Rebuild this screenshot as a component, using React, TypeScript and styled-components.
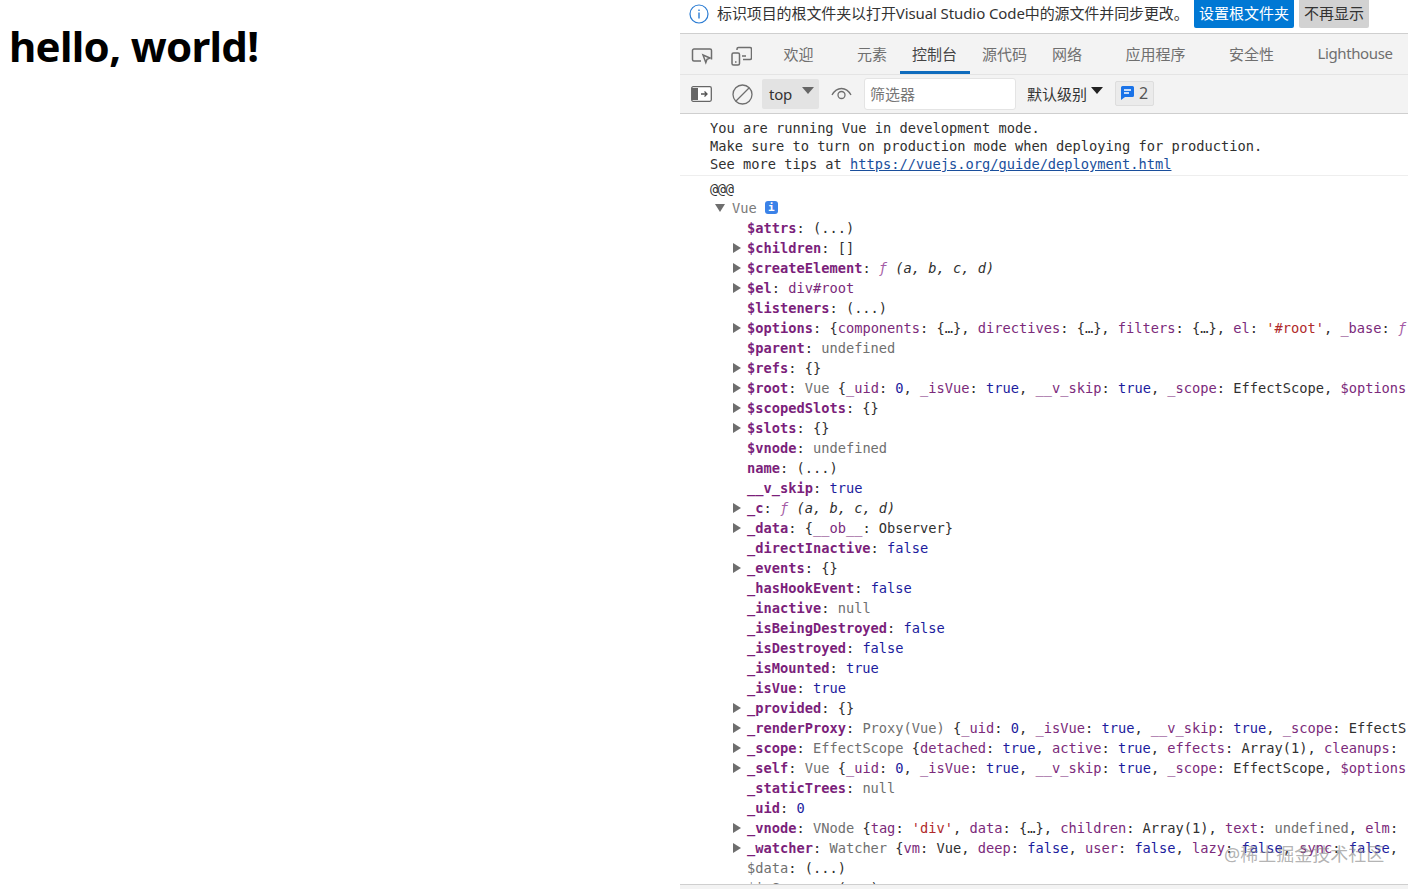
import styled, { createGlobalStyle } from 'styled-components';

type Token = [string, string];
type Row = { arrow?: boolean; tokens: Token[] };

const k = (t: string): Token => ['key', t];
const d = (t: string): Token => ['dim', t];
const p = (t: string): Token => ['plain', t];
const g = (t: string): Token => ['gray', t];
const b = (t: string): Token => ['blue', t];
const s = (t: string): Token => ['str', t];
const a = (t: string): Token => ['attr', t];
const f = (t: string): Token => ['fn', t];
const sig = (t: string): Token => ['sig', t];

const rows: Row[] = [
  { tokens: [k('$attrs'), p(': (...)')] },
  { arrow: true, tokens: [k('$children'), p(': []')] },
  { arrow: true, tokens: [k('$createElement'), p(': '), f('ƒ '), sig('(a, b, c, d)')] },
  { arrow: true, tokens: [k('$el'), p(': '), a('div#root')] },
  { tokens: [k('$listeners'), p(': (...)')] },
  {
    arrow: true,
    tokens: [
      k('$options'),
      p(': {'),
      a('components'),
      p(': {…}, '),
      a('directives'),
      p(': {…}, '),
      a('filters'),
      p(': {…}, '),
      a('el'),
      p(': '),
      s("'#root'"),
      p(', '),
      a('_base'),
      p(': '),
      f('ƒ'),
    ],
  },
  { tokens: [k('$parent'), p(': '), g('undefined')] },
  { arrow: true, tokens: [k('$refs'), p(': {}')] },
  {
    arrow: true,
    tokens: [
      k('$root'),
      p(': '),
      g('Vue '),
      p('{'),
      a('_uid'),
      p(': '),
      b('0'),
      p(', '),
      a('_isVue'),
      p(': '),
      b('true'),
      p(', '),
      a('__v_skip'),
      p(': '),
      b('true'),
      p(', '),
      a('_scope'),
      p(': EffectScope, '),
      a('$options'),
    ],
  },
  { arrow: true, tokens: [k('$scopedSlots'), p(': {}')] },
  { arrow: true, tokens: [k('$slots'), p(': {}')] },
  { tokens: [k('$vnode'), p(': '), g('undefined')] },
  { tokens: [k('name'), p(': (...)')] },
  { tokens: [k('__v_skip'), p(': '), b('true')] },
  { arrow: true, tokens: [k('_c'), p(': '), f('ƒ '), sig('(a, b, c, d)')] },
  { arrow: true, tokens: [k('_data'), p(': {'), a('__ob__'), p(': Observer}')] },
  { tokens: [k('_directInactive'), p(': '), b('false')] },
  { arrow: true, tokens: [k('_events'), p(': {}')] },
  { tokens: [k('_hasHookEvent'), p(': '), b('false')] },
  { tokens: [k('_inactive'), p(': '), g('null')] },
  { tokens: [k('_isBeingDestroyed'), p(': '), b('false')] },
  { tokens: [k('_isDestroyed'), p(': '), b('false')] },
  { tokens: [k('_isMounted'), p(': '), b('true')] },
  { tokens: [k('_isVue'), p(': '), b('true')] },
  { arrow: true, tokens: [k('_provided'), p(': {}')] },
  {
    arrow: true,
    tokens: [
      k('_renderProxy'),
      p(': '),
      g('Proxy(Vue) '),
      p('{'),
      a('_uid'),
      p(': '),
      b('0'),
      p(', '),
      a('_isVue'),
      p(': '),
      b('true'),
      p(', '),
      a('__v_skip'),
      p(': '),
      b('true'),
      p(', '),
      a('_scope'),
      p(': EffectS'),
    ],
  },
  {
    arrow: true,
    tokens: [
      k('_scope'),
      p(': '),
      g('EffectScope '),
      p('{'),
      a('detached'),
      p(': '),
      b('true'),
      p(', '),
      a('active'),
      p(': '),
      b('true'),
      p(', '),
      a('effects'),
      p(': Array(1), '),
      a('cleanups'),
      p(': '),
    ],
  },
  {
    arrow: true,
    tokens: [
      k('_self'),
      p(': '),
      g('Vue '),
      p('{'),
      a('_uid'),
      p(': '),
      b('0'),
      p(', '),
      a('_isVue'),
      p(': '),
      b('true'),
      p(', '),
      a('__v_skip'),
      p(': '),
      b('true'),
      p(', '),
      a('_scope'),
      p(': EffectScope, '),
      a('$options'),
    ],
  },
  { tokens: [k('_staticTrees'), p(': '), g('null')] },
  { tokens: [k('_uid'), p(': '), b('0')] },
  {
    arrow: true,
    tokens: [
      k('_vnode'),
      p(': '),
      g('VNode '),
      p('{'),
      a('tag'),
      p(': '),
      s("'div'"),
      p(', '),
      a('data'),
      p(': {…}, '),
      a('children'),
      p(': Array(1), '),
      a('text'),
      p(': '),
      g('undefined'),
      p(', '),
      a('elm'),
      p(':'),
    ],
  },
  {
    arrow: true,
    tokens: [
      k('_watcher'),
      p(': '),
      g('Watcher '),
      p('{'),
      a('vm'),
      p(': Vue, '),
      a('deep'),
      p(': '),
      b('false'),
      p(', '),
      a('user'),
      p(': '),
      b('false'),
      p(', '),
      a('lazy'),
      p(': '),
      b('false'),
      p(', '),
      a('sync'),
      p(': '),
      b('false'),
      p(', '),
    ],
  },
  { tokens: [d('$data'), p(': (...)')] },
  { tokens: [d('$isServer'), p(': (...)')] },
];

const tabs = [
  { label: '欢迎', extra: true },
  { label: '元素' },
  { label: '控制台', active: true },
  { label: '源代码' },
  { label: '网络', extra: true },
  { label: '应用程序', extra: true },
  { label: '安全性', extra: true },
  { label: 'Lighthouse', latin: true },
];

const GlobalStyle = createGlobalStyle`
  html, body {
    margin: 0;
    padding: 0;
    background: #fff;
  }
  body {
    font-family: "Noto Sans", "Noto Sans CJK SC", sans-serif;
  }
`;

const Page = styled.div`
  display: flex;
  width: 1408px;
  height: 889px;
  overflow: hidden;
`;

const Preview = styled.main`
  width: 680px;
  flex-shrink: 0;
  padding: 17px 9px;
  box-sizing: border-box;
`;

const Heading = styled.h1`
  margin: 0;
  font-family: "Noto Sans", "Liberation Sans", sans-serif;
  font-size: 42px;
  line-height: 58px;
  letter-spacing: -0.7px;
  font-weight: 700;
  color: #000;
`;

const DevTools = styled.section`
  position: relative;
  width: 728px;
  height: 889px;
  display: flex;
  flex-direction: column;
  overflow: hidden;
`;

const Banner = styled.div`
  height: 34px;
  flex-shrink: 0;
  display: flex;
  align-items: center;
  padding: 0 0 5px 9px;
  box-sizing: border-box;
  border-bottom: 1px solid #cfcfcf;
  font-size: 15px;
  color: #333;
  white-space: nowrap;
`;

const BannerText = styled.span`
  margin-left: 8px;
  padding-bottom: 4px;
  width: 477px;
  letter-spacing: -0.1px;
`;

const BannerButton = styled.button<{ $primary?: boolean }>`
  height: 28px;
  margin: 0 5px 0 0;
  padding: 0 5px 4px;
  border: 0;
  border-radius: 0 0 2px 2px;
  font: inherit;
  background: ${(props) => (props.$primary ? '#0078d4' : '#d2d2d2')};
  color: ${(props) => (props.$primary ? '#fff' : '#333')};
`;

const TabBar = styled.nav`
  height: 41px;
  flex-shrink: 0;
  display: flex;
  align-items: stretch;
  padding-left: 11px;
  box-sizing: border-box;
  background: #f3f3f3;
  border-bottom: 1px solid #e4e4e4;
`;

const IconSlot = styled.div`
  display: flex;
  flex-shrink: 0;
  align-items: center;
  width: 40px;
  color: #6e6e6e;
`;

const NavIconSlot = styled(IconSlot)`
  padding-top: 3px;
`;

const TabList = styled.div`
  display: flex;
`;

const Tab = styled.div<{ $active?: boolean; $extra?: boolean; $latin?: boolean }>`
  position: relative;
  display: flex;
  align-items: center;
  padding: 0 12.5px 2px;
  margin-right: ${(props) => (props.$extra ? '18.5px' : '0')};
  font-size: 15px;
  letter-spacing: ${(props) => (props.$latin ? '-0.4px' : '0')};
  color: ${(props) => (props.$active ? '#444' : '#6f6f6f')};
  white-space: nowrap;
  ${(props) =>
    props.$active &&
    `&::after {
      content: '';
      position: absolute;
      left: 0;
      right: 0;
      bottom: 0;
      height: 3px;
      background: #0f6cbd;
    }`}
`;

const FilterBar = styled.div`
  height: 39px;
  flex-shrink: 0;
  display: flex;
  align-items: center;
  padding-left: 11px;
  box-sizing: border-box;
  background: #f3f3f3;
  border-bottom: 1px solid #cfcfcf;
`;

const ClearSlot = styled(IconSlot)`
  width: 30px;
  margin-left: 1px;
`;

const ContextSelect = styled.div`
  width: 57px;
  height: 30px;
  flex-shrink: 0;
  box-sizing: border-box;
  padding: 3px 5px 0 7px;
  display: flex;
  justify-content: space-between;
  background: #e3e3e3;
  border-radius: 2px;
  font-size: 15px;
  line-height: 24px;
  letter-spacing: -0.2px;
  color: #333;
`;

const Caret = styled.span`
  width: 0;
  height: 0;
  margin-top: 5px;
  border-left: 6px solid transparent;
  border-right: 6px solid transparent;
  border-top: 7px solid #666;
`;

const EyeSlot = styled.div`
  display: flex;
  justify-content: center;
  width: 45px;
  color: #6e6e6e;
`;

const FilterInput = styled.div`
  width: 152px;
  height: 32px;
  box-sizing: border-box;
  padding-left: 5px;
  background: #fff;
  border: 1px solid #e4e4e4;
  border-radius: 3px;
  font-size: 15px;
  line-height: 31px;
  color: #777;
`;

const LevelSelect = styled.div`
  display: flex;
  margin-left: 11px;
  font-size: 15px;
  line-height: 24px;
  color: #333;
  width: 88px;
`;

const LevelCaret = styled(Caret)`
  margin-left: 4px;
  border-top-color: #222;
`;

const IssueBadge = styled.div`
  width: 39px;
  height: 25px;
  display: flex;
  align-items: center;
  justify-content: center;
  gap: 5px;
  box-sizing: border-box;
  padding-bottom: 2px;
  background: #ebebeb;
  border: 1px solid #ddd;
  border-radius: 2px;
  font-size: 16px;
  color: #555;
  margin-top: -1px;
`;

const ConsoleBody = styled.div`
  flex: 1;
  min-height: 0;
  overflow: hidden;
  font-family: "DejaVu Sans Mono", monospace;
  font-size: 13.7px;
  color: #303030;
  white-space: nowrap;
`;

const VueMessage = styled.div`
  height: 62px;
  box-sizing: border-box;
  padding: 5px 0 0 30px;
  line-height: 18px;
  border-bottom: 1px solid #eee;
`;

const DocLink = styled.a`
  color: #1a4f9c;
  text-decoration: underline;
`;

const LogBlock = styled.div`
  padding-top: 4px;
`;

const LogLine = styled.div`
  height: 18px;
  line-height: 18px;
  padding-left: 30px;
  letter-spacing: -0.4px;
`;

const VueLine = styled.div`
  display: flex;
  align-items: center;
  height: 20px;
  padding-left: 35px;
  color: #7a7a7a;
`;

const TreeRow = styled.div<{ $arrow?: boolean }>`
  display: flex;
  align-items: center;
  height: 20px;
  padding-left: ${(props) => (props.$arrow ? '53px' : '67px')};
`;

const ToggleRight = styled.span`
  width: 0;
  height: 0;
  margin-right: 6px;
  border-top: 5px solid transparent;
  border-bottom: 5px solid transparent;
  border-left: 8px solid #6e6e6e;
`;

const ToggleDown = styled.span`
  width: 0;
  height: 0;
  margin-right: 7px;
  border-left: 5px solid transparent;
  border-right: 5px solid transparent;
  border-top: 8px solid #6e6e6e;
`;

const InfoBadge = styled.span`
  width: 13px;
  height: 13px;
  margin: -2px 0 0 8px;
  border-radius: 3px;
  background: #3b82e8;
  color: #fff;
  font-size: 11px;
  font-weight: 700;
  line-height: 13px;
  text-align: center;
`;

const Piece = styled.span<{ $kind: string }>`
  white-space: pre;
  color: ${(props) =>
    ({
      key: '#7b1f7b',
      dim: '#6f6f6f',
      plain: '#303030',
      gray: '#6f6f6f',
      blue: '#1c1c9e',
      str: '#b02a2a',
      attr: '#7b2a7b',
      fn: '#a45aa4',
      sig: '#303030',
    })[props.$kind]};
  font-weight: ${(props) => (props.$kind === 'key' ? 700 : 400)};
  font-style: ${(props) => (props.$kind === 'fn' || props.$kind === 'sig' ? 'italic' : 'normal')};
`;

const Footer = styled.div`
  height: 4px;
  flex-shrink: 0;
  background: #f3f3f3;
  border-top: 1px solid #cfcfcf;
`;

const Watermark = styled.div`
  position: absolute;
  left: 544px;
  top: 842px;
  font-size: 18px;
  line-height: 24px;
  color: rgba(130, 130, 130, 0.62);
  white-space: nowrap;
`;

const InfoIcon = () => (
  <svg width="20" height="20" viewBox="0 0 20 20" fill="none" stroke="#2b7cd3" strokeWidth="1.2">
    <circle cx="10" cy="10" r="9" />
    <path d="M10 8.5v6M10 5.5v1.5" strokeWidth="1.4" />
  </svg>
);

const InspectIcon = () => (
  <svg width="22" height="20" viewBox="0 0 22 20" fill="none" stroke="currentColor" strokeWidth="1.5">
    <path d="M10 15H3a1.5 1.5 0 0 1-1.5-1.5v-9A1.5 1.5 0 0 1 3 3h16a1.5 1.5 0 0 1 1.5 1.5v9" />
    <path d="M12 9l7 3-3 1.2-1.2 3.3z" />
  </svg>
);

const DeviceIcon = () => (
  <svg width="21" height="20" viewBox="0 0 21 20" fill="none" stroke="currentColor" strokeWidth="1.5">
    <rect x="1" y="7" width="7.5" height="12" rx="1.5" />
    <path d="M6 4V3a1.5 1.5 0 0 1 1.5-1.5H19A1.5 1.5 0 0 1 20.5 3v9a1.5 1.5 0 0 1-1.5 1.5h-7" />
    <path d="M11 10h4" />
    <path d="M4 16h1.5" />
  </svg>
);

const SidebarIcon = () => (
  <svg width="21" height="16" viewBox="0 0 21 16">
    <rect x="0.7" y="0.7" width="19.6" height="14.6" rx="1.5" fill="#fff" stroke="#666" strokeWidth="1.3" />
    <path d="M1 2h6v12H1z" fill="#666" />
    <path d="M10 8h6M13.5 5.5L16 8l-2.5 2.5" fill="none" stroke="#555" strokeWidth="1.3" />
  </svg>
);

const ClearIcon = () => (
  <svg width="21" height="21" viewBox="0 0 21 21" fill="none" stroke="#6e6e6e" strokeWidth="1.3">
    <circle cx="10.5" cy="10.5" r="9.5" />
    <path d="M4 17L17 4" />
  </svg>
);

const EyeIcon = () => (
  <svg width="21" height="14" viewBox="0 0 21 14" fill="none" stroke="currentColor" strokeWidth="1.3">
    <path d="M1 8c2.5-4.5 5.7-6.5 9.5-6.5S17.5 3.5 20 8" />
    <circle cx="10.5" cy="8" r="3.5" />
  </svg>
);

const MessageIcon = () => (
  <svg width="13" height="14" viewBox="0 0 13 14">
    <path d="M0 1.5A1.5 1.5 0 0 1 1.5 0h10A1.5 1.5 0 0 1 13 1.5v8a1.5 1.5 0 0 1-1.5 1.5H4l-4 3z" fill="#1a73e8" />
    <path d="M3 4h7M3 7h5" stroke="#fff" strokeWidth="1.3" />
  </svg>
);

const App = () => {
  return (
    <Page>
      <GlobalStyle />
      <Preview>
        <Heading>hello, world!</Heading>
      </Preview>
      <DevTools>
        <Banner>
          <InfoIcon />
          <BannerText>标识项目的根文件夹以打开Visual Studio Code中的源文件并同步更改。</BannerText>
          <BannerButton $primary>设置根文件夹</BannerButton>
          <BannerButton>不再显示</BannerButton>
        </Banner>
        <TabBar>
          <NavIconSlot>
            <InspectIcon />
          </NavIconSlot>
          <NavIconSlot>
            <DeviceIcon />
          </NavIconSlot>
          <TabList>
            {tabs.map((tab) => (
              <Tab key={tab.label} $active={tab.active} $extra={tab.extra} $latin={tab.latin}>
                {tab.label}
              </Tab>
            ))}
          </TabList>
        </TabBar>
        <FilterBar>
          <IconSlot>
            <SidebarIcon />
          </IconSlot>
          <ClearSlot>
            <ClearIcon />
          </ClearSlot>
          <ContextSelect>
            top
            <Caret />
          </ContextSelect>
          <EyeSlot>
            <EyeIcon />
          </EyeSlot>
          <FilterInput>筛选器</FilterInput>
          <LevelSelect>
            默认级别
            <LevelCaret />
          </LevelSelect>
          <IssueBadge>
            <MessageIcon />2
          </IssueBadge>
        </FilterBar>
        <ConsoleBody>
          <VueMessage>
            You are running Vue in development mode.
            <br />
            Make sure to turn on production mode when deploying for production.
            <br />
            See more tips at <DocLink>https://vuejs.org/guide/deployment.html</DocLink>
          </VueMessage>
          <LogBlock>
            <LogLine>@@@</LogLine>
            <VueLine>
              <ToggleDown />
              Vue
              <InfoBadge>i</InfoBadge>
            </VueLine>
            {rows.map((row, i) => (
              <TreeRow key={i} $arrow={row.arrow}>
                {row.arrow && <ToggleRight />}
                {row.tokens.map(([kind, text], j) => (
                  <Piece key={j} $kind={kind}>
                    {text}
                  </Piece>
                ))}
              </TreeRow>
            ))}
          </LogBlock>
        </ConsoleBody>
        <Footer />
        <Watermark>@稀土掘金技术社区</Watermark>
      </DevTools>
    </Page>
  );
};

export default App;
